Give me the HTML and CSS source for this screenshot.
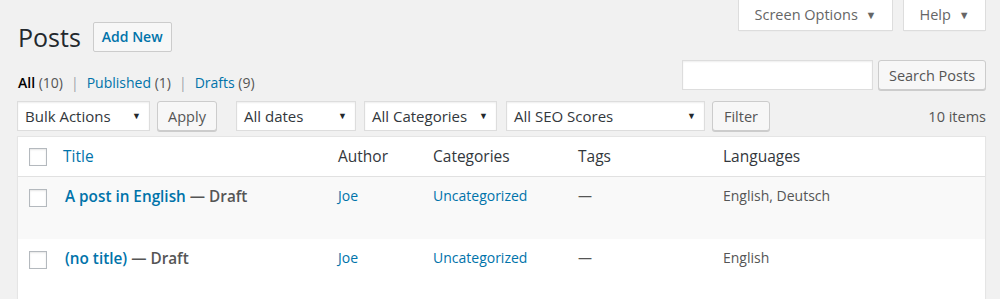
FILE: index.html
```html
<!DOCTYPE html>
<html lang="en">
  <head>
    <meta charset="UTF-8" />
    <title>Posts</title>
    <link rel="stylesheet" href="styles.css">
  </head>
  <body>
    <div class="page">
      <div class="top">
        <div class="heading">
          <h1>Posts</h1>
          <a class="title-action" href="#">Add New</a>
        </div>
        <div class="screen-tabs">
          <a class="tab tab-options" href="#">Screen Options <span class="arrow">&#9660;</span></a>
          <a class="tab tab-help" href="#">Help <span class="arrow">&#9660;</span></a>
        </div>
      </div>

      <div class="views">
        <ul class="subsubsub">
          <li><a class="current" href="#">All</a> <span class="count">(10)</span></li>
          <li class="sep">|</li>
          <li><a href="#">Published <span class="count">(1)</span></a></li>
          <li class="sep">|</li>
          <li><a href="#">Drafts <span class="count">(9)</span></a></li>
        </ul>
        <div class="search-box">
          <input type="search" class="search-input" />
          <button class="button">Search Posts</button>
        </div>
      </div>

      <div class="tablenav">
        <div class="select sel-bulk">Bulk Actions</div>
        <button class="button btn-apply">Apply</button>
        <div class="select sel-dates">All dates</div>
        <div class="select sel-cats">All Categories</div>
        <div class="select sel-seo">All SEO Scores</div>
        <button class="button btn-filter">Filter</button>
        <span class="num-items">10 items</span>
      </div>

      <div class="posts">
        <div class="row head">
          <div class="cell cb"><span class="checkbox"></span></div>
          <div class="cell"><a href="#" class="sortable">Title</a></div>
          <div class="cell">Author</div>
          <div class="cell">Categories</div>
          <div class="cell">Tags</div>
          <div class="cell">Languages</div>
        </div>
        <div class="row alt">
          <div class="cell cb"><span class="checkbox"></span></div>
          <div class="cell title"><a href="#">A post in English</a> &mdash; <span class="state">Draft</span></div>
          <div class="cell"><a href="#">Joe</a></div>
          <div class="cell"><a href="#">Uncategorized</a></div>
          <div class="cell muted">&mdash;</div>
          <div class="cell muted">English, Deutsch</div>
        </div>
        <div class="row">
          <div class="cell cb"><span class="checkbox"></span></div>
          <div class="cell title"><a href="#">(no title)</a> &mdash; <span class="state">Draft</span></div>
          <div class="cell"><a href="#">Joe</a></div>
          <div class="cell"><a href="#">Uncategorized</a></div>
          <div class="cell muted">&mdash;</div>
          <div class="cell muted">English</div>
        </div>
      </div>
    </div>
  </body>
</html>
```

FILE: styles.css
```css
body {
  margin: 0;
  background: #f1f1f1;
  font-family: "Open Sans", "Liberation Sans", sans-serif;
  font-size: 14px;
  color: #444;
}
a {
  color: #0073aa;
  text-decoration: none;
}
.page {
  padding: 0 14px 0 17px;
}

/* header */
.top {
  display: flex;
  justify-content: space-between;
  align-items: flex-start;
  height: 51px;
}
.heading {
  display: flex;
  align-items: center;
  margin-top: 22px;
}
h1 {
  margin: 0 0 0 1px;
  font-size: 25px;
  font-weight: 400;
  line-height: 30px;
  color: #23282d;
}
.title-action {
  margin-left: 12px;
  height: 28px;
  line-height: 28px;
  padding: 0 8px;
  border: 1px solid #ccc;
  border-radius: 2px;
  background: #f7f7f7;
  font-size: 14px;
  font-weight: 600;
}
.screen-tabs {
  display: flex;
  gap: 10px;
}
.tab {
  height: 30px;
  line-height: 30px;
  border: 1px solid #ddd;
  border-top: none;
  background: #fff;
  color: #666;
  font-size: 14.5px;
  box-shadow: 0 1px 1px -1px rgba(0, 0, 0, 0.1);
}
.tab-options {
  width: 153px;
  text-align: center;
}
.tab-help {
  width: 81px;
  text-align: center;
}
.arrow {
  font-size: 11px;
  margin-left: 4px;
  color: #666;
  vertical-align: 1px;
}

/* views + search */
.views {
  display: flex;
  justify-content: space-between;
  align-items: flex-end;
  margin-top: 9px;
  height: 31px;
}
.subsubsub {
  display: flex;
  list-style: none;
  margin: 0 0 -2px 1px;
  padding: 0;
  line-height: 20px;
  font-size: 14px;
  color: #666;
}
.subsubsub li {
  white-space: pre;
}
.subsubsub .current {
  color: #000;
  font-weight: 600;
}
.subsubsub .sep {
  padding: 0 8px;
  color: #a0a5aa;
}
.count {
  color: #555;
  font-weight: 400;
}
.search-box {
  display: flex;
  gap: 5px;
  align-self: flex-start;
}
.search-input {
  width: 191px;
  height: 30px;
  box-sizing: border-box;
  border: 1px solid #ddd;
  box-shadow: inset 0 1px 2px rgba(0, 0, 0, 0.07);
  background: #fff;
  margin: 0;
  padding: 0 6px;
}
.button {
  height: 30px;
  box-sizing: border-box;
  border: 1px solid #ccc;
  border-radius: 3px;
  background: #f7f7f7;
  box-shadow: 0 1px 0 #ccc;
  color: #555;
  font-family: inherit;
  font-size: 14.5px;
  padding: 0 8px;
  margin: 0;
}
.search-box .button {
  width: 108px;
}

/* tablenav */
.tablenav {
  display: flex;
  align-items: center;
  margin-top: 10px;
  height: 30px;
}
.select {
  position: relative;
  height: 30px;
  line-height: 28px;
  box-sizing: border-box;
  border: 1px solid #ddd;
  background: #fff;
  box-shadow: inset 0 1px 2px rgba(0, 0, 0, 0.07);
  padding-left: 7px;
  color: #32373c;
  font-size: 15px;
}
.select::after {
  content: "\25BC";
  position: absolute;
  right: 8px;
  top: 0;
  font-size: 9px;
  color: #23282d;
}
.sel-bulk {
  width: 133px;
}
.btn-apply {
  width: 60px;
  margin-left: 7px;
}
.sel-dates {
  width: 120px;
  margin-left: 19px;
}
.sel-cats {
  width: 133px;
  margin-left: 8px;
}
.sel-seo {
  width: 199px;
  margin-left: 9px;
}
.btn-filter {
  width: 58px;
  margin-left: 7px;
}
.num-items {
  margin-left: auto;
  color: #555;
  font-size: 14.5px;
}

/* list table */
.posts {
  margin-top: 5px;
  background: #fff;
  border: 1px solid #e5e5e5;
  box-shadow: 0 1px 1px rgba(0, 0, 0, 0.04);
}
.row {
  display: grid;
  grid-template-columns: 37px 275px 95px 145px 145px 1fr;
  height: 62px;
}
.row.head {
  height: 39px;
  border-bottom: 1px solid #e1e1e1;
}
.row.head .cell {
  font-size: 15.5px;
}
.row.alt {
  background: #f9f9f9;
}
.cell {
  padding: 9px 0 0 8px;
  line-height: 20px;
  font-size: 14px;
  color: #32373c;
}
.cell.cb {
  padding: 11px 0 0 11px;
}
.row:not(.head) .cell.cb {
  padding-top: 12px;
}
.checkbox {
  display: block;
  width: 16px;
  height: 16px;
  border: 1px solid #b4b9be;
  background: #fff;
  box-shadow: inset 0 1px 2px rgba(0, 0, 0, 0.1);
}
.cell.title {
  padding-left: 10px;
  font-size: 15.3px;
  font-weight: 600;
  color: #555;
}
.cell.muted {
  color: #555;
}
```
